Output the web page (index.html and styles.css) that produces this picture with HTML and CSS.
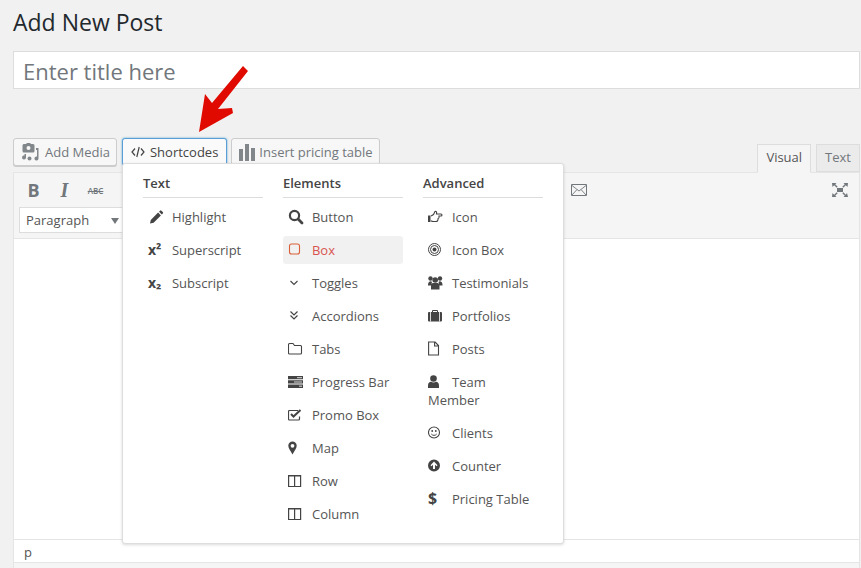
FILE: index.html
```html
<!DOCTYPE html>
<html lang="en">
<head>
    <meta charset="UTF-8">
    <title>Add New Post</title>
    <link rel="stylesheet" href="styles.css">
</head>
<body>
<div class="page">
    <h1>Add New Post</h1>
    <input class="title-input" type="text" placeholder="Enter title here">

    <div class="editor-tools">
        <a class="btn btn-media" href="#">
            <svg class="btn-ico" viewBox="0 0 18 18" width="18" height="18"><path d="M3 1h2l1-1h3l1 1h2a1.500 1.500 0 0 1 1.500 1.500V8a1.500 1.500 0 0 1-1.500 1.500H3A1.500 1.500 0 0 1 1.500 8V2.500A1.500 1.500 0 0 1 3 1z" fill="#82878c"/><circle cx="7.500" cy="5" r="2" fill="#f7f7f7"/><path d="M15 5h2.500v10.500a2 2 0 1 1-1.500-2V7h-1zM5 11v3.500a2 2 0 1 1-1.500-2V11z" fill="#82878c"/><circle cx="8.500" cy="15.500" r="2" fill="#82878c"/></svg>
            Add Media
        </a>
        <div class="shortcodes">
            <a class="btn btn-active" href="#">
                <svg class="btn-ico" viewBox="0 0 14 14" width="14" height="14"><path d="M4 3.500L1 7l3 3.500M10 3.500L13 7l-3 3.500M8.200 2L5.800 12" fill="none" stroke="#444" stroke-width="1.200"/></svg>
                Shortcodes
            </a>
            <div class="dropdown">
                <div class="col">
                    <h4>Text</h4>
                    <ul>
                        <li>
                            <svg class="ico" viewBox="0 0 16 16"><path d="M2 14.500l.8-3.600 7.300-7.300 2.800 2.800-7.300 7.300zM11 2.700l1-1a1 1 0 0 1 1.400 0l1.400 1.400a1 1 0 0 1 0 1.400l-1 1z" fill="#444"/></svg>Highlight
                        </li>
                        <li><span class="ico ico-text">x²</span>Superscript</li>
                        <li><span class="ico ico-text">x₂</span>Subscript</li>
                    </ul>
                </div>
                <div class="col">
                    <h4>Elements</h4>
                    <ul>
                        <li>
                            <svg class="ico" viewBox="0 0 16 16"><circle cx="6.500" cy="6.500" r="4.600" fill="none" stroke="#444" stroke-width="2.200"/><path d="M10.300 10.300l3.700 3.700" stroke="#444" stroke-width="2.800" stroke-linecap="round"/></svg>Button
                        </li>
                        <li class="on">
                            <svg class="ico" viewBox="0 0 16 16"><rect x="1.500" y="2" width="10" height="10" rx="2" fill="none" stroke="#d9603a" stroke-width="1.100"/></svg>Box
                        </li>
                        <li>
                            <svg class="ico" viewBox="0 0 16 16"><path d="M2.500 6L6 9.500 9.500 6" fill="none" stroke="#444" stroke-width="1.100"/></svg>Toggles
                        </li>
                        <li>
                            <svg class="ico" viewBox="0 0 16 16"><path d="M2.500 3.500L6 7l3.500-3.500M2.500 7.500L6 11l3.500-3.500" fill="none" stroke="#444" stroke-width="1.200"/></svg>Accordions
                        </li>
                        <li>
                            <svg class="ico" viewBox="0 0 16 16"><path d="M.5 12V3.500a1 1 0 0 1 1-1H5l1.500 2h6a1 1 0 0 1 1 1V12a1 1 0 0 1-1 1h-11a1 1 0 0 1-1-1z" fill="none" stroke="#444" stroke-width="1.100"/></svg>Tabs
                        </li>
                        <li>
                            <svg class="ico" viewBox="0 0 16 16"><path d="M0 2h15v3.300H0zM0 6.300h15v3.300H0zM0 10.600h15v3.300H0z" fill="#444"/><path d="M9 3.700h5M6 8h8M11 12.200h3" stroke="#fff" stroke-width=".8"/></svg>Progress Bar
                        </li>
                        <li>
                            <svg class="ico" viewBox="0 0 16 16"><path d="M11.500 9.500V12a1 1 0 0 1-1 1H1.500a1 1 0 0 1-1-1V4.500a1 1 0 0 1 1-1H10" fill="none" stroke="#444" stroke-width="1.200"/><path d="M3 7l2.500 2.500L12.500 3" fill="none" stroke="#444" stroke-width="2"/></svg>Promo Box
                        </li>
                        <li>
                            <svg class="ico" viewBox="0 0 16 16"><path fill-rule="evenodd" d="M4.500 1.500A4.200 4.200 0 0 1 8.700 5.700c0 2.300-2.400 5.500-4.200 8.800C2.700 11.200.3 8 .3 5.700A4.200 4.200 0 0 1 4.500 1.500zm0 2.400a1.900 1.900 0 1 0 0 3.800 1.900 1.900 0 0 0 0-3.800z" fill="#444"/></svg>Map
                        </li>
                        <li>
                            <svg class="ico" viewBox="0 0 16 16"><path d="M.6 2.500h12v11H.6zM6.600 2.500v11" fill="none" stroke="#444" stroke-width="1.200"/><path d="M0 2h13v1.500H0z" fill="#444"/></svg>Row
                        </li>
                        <li>
                            <svg class="ico" viewBox="0 0 16 16"><path d="M.6 2.500h12v11H.6zM6.600 2.500v11" fill="none" stroke="#444" stroke-width="1.200"/><path d="M0 2h13v1.500H0z" fill="#444"/></svg>Column
                        </li>
                    </ul>
                </div>
                <div class="col">
                    <h4>Advanced</h4>
                    <ul>
                        <li>
                            <svg class="ico" viewBox="0 0 16 16"><path d="M0 6.500h2.500v6.500H0z" fill="#444"/><path d="M3 7l2.500-1.500L7 2.500c1.200-.5 2 .5 1.500 2.500h4.500c1.300 0 1.300 2 0 2h-2c.3 1.500-.3 2.500-1 2.700.2 1.300-.5 2.800-2 2.800H5c-1 0-1.500-.5-2-.7" fill="none" stroke="#444" stroke-width="1.100"/></svg>Icon
                        </li>
                        <li>
                            <svg class="ico" viewBox="0 0 16 16"><circle cx="6.500" cy="7.500" r="6" fill="none" stroke="#444" stroke-width="1"/><circle cx="6.500" cy="7.500" r="4" fill="none" stroke="#444" stroke-width="1"/><circle cx="6.500" cy="7.500" r="2" fill="#444"/></svg>Icon Box
                        </li>
                        <li>
                            <svg class="ico" viewBox="0 0 16 16"><circle cx="2.500" cy="3.500" r="2.200" fill="#444"/><circle cx="12" cy="3.500" r="2.200" fill="#444"/><circle cx="7.200" cy="5" r="2.800" fill="#444"/><path d="M0 10c0-2.500 1-3.800 3-3.800l1 .8-1 3.500H0zM14.500 10c0-2.500-1-3.800-3-3.800l-1 .8 1 3.500h3zM3 14.500v-3.500c0-2 1-3 2-3h4.500c1 0 2 1 2 3v3.500z" fill="#444"/></svg>Testimonials
                        </li>
                        <li>
                            <svg class="ico" viewBox="0 0 16 16"><path fill-rule="evenodd" d="M4 4V3a1 1 0 0 1 1-1h4a1 1 0 0 1 1 1v1h3a1 1 0 0 1 1 1v7.500a1 1 0 0 1-1 1H1a1 1 0 0 1-1-1V5a1 1 0 0 1 1-1zm1 0h4V3H5z" fill="#444"/><path d="M2.500 4v9.500M11.500 4v9.500" stroke="#fff" stroke-width=".8"/></svg>Portfolios
                        </li>
                        <li>
                            <svg class="ico" viewBox="0 0 16 16"><path d="M.6 1h6.500L10.500 4.500V14H.6zM6.600 1V5h3.900" fill="none" stroke="#444" stroke-width="1.100"/></svg>Posts
                        </li>
                        <li>
                            <svg class="ico" viewBox="0 0 16 16"><circle cx="5.500" cy="4.500" r="3.300" fill="#444"/><path d="M0 14v-2.500C0 9 1.500 7.800 3 7.800c1.500 1 3.500 1 5 0 1.500 0 3 1.200 3 3.700V14z" fill="#444"/></svg>Team Member
                        </li>
                        <li>
                            <svg class="ico" viewBox="0 0 16 16"><circle cx="6" cy="7.500" r="5.500" fill="none" stroke="#444" stroke-width="1.100"/><circle cx="4.200" cy="6" r=".9" fill="#444"/><circle cx="7.800" cy="6" r=".9" fill="#444"/><path d="M3.300 9c1.200 1.800 4.200 1.800 5.400 0" fill="none" stroke="#444"/></svg>Clients
                        </li>
                        <li>
                            <svg class="ico" viewBox="0 0 16 16"><path fill-rule="evenodd" d="M6 1.500a6 6 0 1 1 0 12 6 6 0 0 1 0-12zm0 2L2.500 7.200l1 1L5 6.700V11h2V6.700l1.500 1.500 1-1z" fill="#444"/></svg>Counter
                        </li>
                        <li><span class="ico ico-dollar">$</span>Pricing Table</li>
                    </ul>
                </div>
            </div>
        </div>
        <a class="btn btn-chart" href="#">
            <svg class="btn-ico" viewBox="0 0 16 17" width="16" height="17"><path d="M0 5h4v12H0zM6 0h4v17H6zM12 4h4v13h-4z" fill="#82878c"/></svg>
            Insert pricing table
        </a>
        <div class="tabs">
            <div class="tab tab-on">Visual</div>
            <div class="tab">Text</div>
        </div>
    </div>

    <div class="editor">
        <div class="toolbar">
            <div class="tool-row">
                <span class="tool tool-b">B</span>
                <span class="tool tool-i">I</span>
                <span class="tool tool-abc">ABC</span>
                <svg class="tool-mail" viewBox="0 0 16 12" width="16" height="12"><path d="M.5.500h15v11H.5z" fill="none" stroke="#72777c"/><path d="M1 1.500L8 7l7-5.500M1 11l5-5.500M15 11l-5-5.500" fill="none" stroke="#72777c" stroke-width=".9"/></svg>
                <svg class="tool-full" viewBox="0 0 16 14" width="16" height="14"><path d="M5 5h6v4H5z" fill="#72777c"/><path d="M0 0h4.500L3.200 1.300l2.500 2.500-1 1L2.200 2.300.5 4zM16 0h-4.500l1.300 1.300-2.500 2.500 1 1 2.500-2.500L15.500 4zM0 14h4.500l-1.300-1.300 2.500-2.500-1-1-2.500 2.500L.5 10zM16 14h-4.500l1.300-1.300-2.500-2.500 1-1 2.500 2.500 1.200-1.700z" fill="#72777c"/></svg>
            </div>
            <div class="format-select">Paragraph<span class="caret"></span></div>
        </div>
        <div class="content"></div>
        <div class="status">p</div>
    </div>

    <svg class="arrow" viewBox="0 0 60 70" width="60" height="70"><polygon points="9,66 15,28 22,37 53,0 58,5 28,43 42,42 43,47" fill="#e00a00"/></svg>
</div>
</body>
</html>
```

FILE: styles.css
```css
*{
    margin:0;
    padding:0;
    box-sizing:border-box;
}
html,body{
    height:100%;
    overflow:hidden;
}
body{
    background:#f1f1f1;
    font-family:"Open Sans","Liberation Sans",sans-serif;
    font-size:13px;
    color:#444;
}
.page{
    position:relative;
    padding:8px 1px 0 13px;
}
h1{
    font-size:23px;
    font-weight:400;
    line-height:29px;
    color:#23282d;
}
.title-input{
    display:block;
    width:100%;
    height:38px;
    margin-top:14px;
    padding:1px 9px 0;
    border:1px solid #ddd;
    background:#fff;
    font-family:inherit;
    font-size:22px;
    outline:none;
}
.title-input::placeholder{
    color:#72777c;
    opacity:1;
}
.editor-tools{
    display:flex;
    align-items:flex-start;
    margin-top:49px;
    height:34px;
}
.btn{
    display:flex;
    align-items:center;
    gap:5px;
    height:28px;
    padding:0 7px;
    margin-right:4px;
    border:1px solid #ccc;
    border-radius:3px;
    background:#f7f7f7;
    box-shadow:0 1px 0 #ccc;
    color:#72777c;
    font-size:13px;
    text-decoration:none;
    white-space:nowrap;
}
.btn-media{
    gap:6px;
    padding-right:6px;
    margin-right:5px;
}
.btn-chart{
    gap:4px;
    padding-right:6px;
}
.btn-active{
    border:1px solid #5b9dd9;
    color:#444;
    background:#fafafa;
    box-shadow:0 0 2px rgba(30,140,190,.8);
    padding:0 8px;
}
.shortcodes{
    position:relative;
}
.dropdown{
    position:absolute;
    left:0;
    top:25px;
    z-index:5;
    display:flex;
    gap:20px;
    width:442px;
    padding:10px 20px;
    background:#fff;
    border:1px solid #ddd;
    border-radius:3px;
    box-shadow:0 1px 3px rgba(0,0,0,.15);
}
.col{
    width:120px;
}
.col h4{
    font-size:13px;
    font-weight:600;
    line-height:18px;
    color:#444;
    padding-bottom:5px;
    border-bottom:1px solid #ddd;
    margin-bottom:5px;
}
.col ul{
    list-style:none;
}
.col li{
    padding:5px 5px;
    margin-bottom:5px;
    line-height:18px;
    border-radius:3px;
    color:#555;
}
.col li.on{
    background:#f1f1f1;
    color:#d9534f;
}
.ico{
    display:inline-block;
    width:16px;
    height:16px;
    margin-right:8px;
    vertical-align:-3px;
}
.ico-text{
    font-weight:700;
    font-size:14px;
    line-height:16px;
    color:#444;
    vertical-align:baseline;
}
.ico-dollar{
    font-weight:700;
    font-size:16px;
    line-height:16px;
    color:#444;
    vertical-align:baseline;
}
.tabs{
    display:flex;
    margin-left:auto;
    margin-top:6px;
    gap:5px;
    align-items:flex-start;
}
.tab{
    height:28px;
    line-height:25px;
    padding:0 8px;
    border:1px solid #ddd;
    background:#ebebeb;
    color:#72777c;
    font-size:13px;
}
.tab-on{
    height:29px;
    background:#f5f5f5;
    border-bottom-color:#f5f5f5;
    color:#555;
    position:relative;
    z-index:1;
}
.editor{
    border:1px solid #e5e5e5;
    background:#f5f5f5;
    height:400px;
}
.toolbar{
    height:66px;
    padding:0 5px;
    border-bottom:1px solid #e5e5e5;
}
.tool-row{
    display:flex;
    align-items:center;
    height:34px;
    color:#72777c;
}
.tool{
    display:block;
    width:31px;
    text-align:center;
}
.tool-b{
    font-weight:700;
    font-size:18px;
    margin-left:-1px;
}
.tool-i{
    font-family:"Liberation Serif",serif;
    font-weight:700;
    font-style:italic;
    font-size:20px;
}
.tool-abc{
    font-size:8px;
    font-weight:600;
    text-decoration:line-through;
}
.tool-mail{
    margin-left:460px;
}
.tool-full{
    margin-left:auto;
    margin-right:6px;
}
.format-select{
    position:relative;
    width:112px;
    height:26px;
    line-height:25px;
    padding-left:6px;
    background:#fff;
    border:1px solid #ddd;
    color:#555;
    font-size:13px;
}
.caret{
    position:absolute;
    left:91px;
    top:10px;
    border:4.500px solid transparent;
    border-top:6px solid #72777c;
    border-bottom:0;
}
.content{
    height:300px;
    background:#fff;
}
.status{
    height:24px;
    padding-left:10px;
    line-height:24px;
    font-size:13px;
    color:#555;
    background:#fff;
    border-top:1px solid #e5e5e5;
    border-bottom:1px solid #e5e5e5;
}
.arrow{
    position:absolute;
    left:190px;
    top:66px;
}
```
